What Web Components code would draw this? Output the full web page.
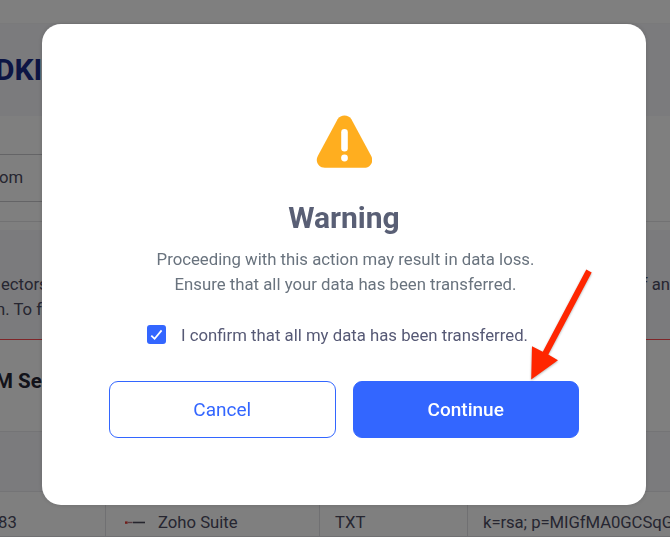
<!DOCTYPE html>
<html lang="en">
<head>
<meta charset="utf-8">
<title>DKIM</title>
<style>
    html, body {
        margin: 0;
        height: 100%;
        overflow: hidden;
        background: #fff;
        font-family: Roboto, "Liberation Sans", sans-serif;
    }
</style>
</head>
<body>
<dkim-page></dkim-page>
<confirm-dialog heading="Warning">
    <span>Proceeding with this action may result in data loss.<br>Ensure that all your data has been transferred.</span>
    <check-box slot="confirm">I confirm that all my data has been transferred.</check-box>
    <action-button slot="actions">Cancel</action-button>
    <action-button slot="actions" primary>Continue</action-button>
</confirm-dialog>
<pointer-arrow></pointer-arrow>

<script>
class DkimPage extends HTMLElement {
    constructor() {
        super();
        this.shadow = this.attachShadow( { mode: 'open' } );
    }

    connectedCallback() {
        this.render();
    }

    render() {
        this.shadow.innerHTML = `
            <style>
                :host {
                    display: flex;
                    flex-direction: column;
                    width: 670px;
                    height: 537px;
                    overflow: hidden;
                    color: #4c4c62;
                    font-size: 16.7px;
                    white-space: nowrap;
                }

                div, h1, h2 {
                    box-sizing: border-box;
                    flex: none;
                }

                .top {
                    height: 24px;
                    border-bottom: 1px solid #f4f4f6;
                }

                .title {
                    height: 92px;
                    margin: 0;
                    background: #f6f6fa;
                    color: #182a88;
                    font-size: 30px;
                    line-height: 91px;
                    font-weight: 700;
                    text-indent: -5px;
                }

                .domain {
                    height: 106px;
                    padding-top: 38px;
                    border-bottom: 1px solid #e4e4e6;
                }

                .input {
                    width: 400px;
                    height: 48px;
                    border: solid #c8c8cc;
                    border-width: 1px 0;
                    line-height: 46px;
                    text-indent: -1px;
                }

                .note {
                    display: flex;
                    justify-content: space-between;
                    height: 110px;
                    margin-top: 8px;
                    padding-top: 42px;
                    background: #f6f6fa;
                    border-bottom: 1px solid #ff4a50;
                    line-height: 25px;
                }

                .note div:first-child {
                    padding-left: 1px;
                }

                .note span {
                    margin-left: -5px;
                }

                .selectors {
                    height: 91px;
                    margin: 0;
                    font-size: 20.5px;
                    line-height: 82px;
                    color: #262634;
                    text-indent: -5px;
                }

                .band {
                    height: 61px;
                    background: #f6f6fa;
                    border: solid #e8e8ec;
                    border-width: 1px 0;
                }

                .row {
                    display: grid;
                    grid-template-columns: 106px 214px 148px 1fr;
                    height: 45px;
                    line-height: 61px;
                    border-bottom: 1px solid #e0e0e4;
                }

                .row > div {
                    padding-left: 15px;
                    border-right: 1px solid #e0e0e4;
                    height: 44px;
                    min-width: 0;
                }

                .row > div:first-child {
                    padding-left: 0;
                    text-indent: -2px;
                }

                .row > div:last-child {
                    border-right: 0;
                    letter-spacing: -.07px;
                }

                .row > div:nth-child(2) {
                    display: flex;
                    align-items: baseline;
                    gap: 13px;
                    padding-left: 19px;
                }

                .row svg {
                    width: 20px;
                    height: 3px;
                    position: relative;
                    top: -4px;
                }
            </style>
            <div class="top"></div>
            <h1 class="title">DKI</h1>
            <div class="domain"><div class="input">om</div></div>
            <div class="note">
                <div>ectors<br><span>n. To f</span></div>
                <div>f an</div>
            </div>
            <h2 class="selectors">M Se</h2>
            <div class="band"></div>
            <div class="row">
                <div>83</div>
                <div>
                    <svg viewBox="0 0 20 3">
                        <rect y="0.4" width="2.6" height="2.4" fill="#e33b35"/>
                        <path d="M2.6 1.5h5" stroke="#b07a84" stroke-width="1.4"/>
                        <path d="M8 1.5h12" stroke="#4a4a5a" stroke-width="1.6"/>
                    </svg>
                    <span>Zoho Suite</span>
                </div>
                <div>TXT</div>
                <div>k=rsa; p=MIGfMA0GCSqG</div>
            </div>
        `
    }
}

class ConfirmDialog extends HTMLElement {
    constructor() {
        super();
        this.shadow = this.attachShadow( { mode: 'open' } );
    }

    connectedCallback() {
        this.render();
    }

    render() {
        this.shadow.innerHTML = `
            <style>
                :host {
                    position: fixed;
                    inset: 0;
                    background: rgba(0,0,0,.5);
                }

                #dialog {
                    box-sizing: border-box;
                    width: 604px;
                    height: 480.5px;
                    margin: 24px 0 0 42px;
                    padding: 91px 67px 0;
                    border-radius: 19px;
                    background: #fff;
                    box-shadow: 0 0 5px rgba(0,0,0,.15);
                    display: flex;
                    flex-direction: column;
                    align-items: center;
                    text-align: center;
                }

                #icon {
                    display: block;
                    width: 56px;
                    height: 54px;
                    flex: none;
                }

                h1 {
                    margin: 31px 0 0;
                    font-size: 30px;
                    line-height: 36px;
                    font-weight: 700;
                    color: #595f75;
                }

                p {
                    margin: 11px 0 0;
                    padding-left: 3px;
                    font-size: 16.75px;
                    line-height: 25px;
                    color: #69737e;
                    white-space: nowrap;
                }

                #confirm {
                    margin: 26px 13px 0 0;
                }

                #actions {
                    display: flex;
                    gap: 17px;
                    width: 470px;
                    margin-top: 33.5px;
                }
            </style>
            <div id="dialog">
                <svg id="icon" viewBox="0 0 56 54">
                    <path d="M21.6 4.2C24.6-.8 32.4-.8 35.4 4.2L55.2 41C58.2 46.8 54.3 52.8 48.1 52.8H8.9C2.7 52.8-1.2 46.8 1.8 41Z" fill="#ffae1f"/>
                    <path d="M28.5 17.3V33.2" stroke="#fff" stroke-width="6.6" stroke-linecap="round"/>
                    <circle cx="28.5" cy="43" r="3.4" fill="#fff"/>
                </svg>
                <h1>${this.getAttribute( 'heading' )}</h1>
                <p><slot></slot></p>
                <div id="confirm"><slot name="confirm"></slot></div>
                <div id="actions"><slot name="actions"></slot></div>
            </div>
        `
    }
}

class CheckBox extends HTMLElement {
    constructor() {
        super();
        this.shadow = this.attachShadow( { mode: 'open' } );
    }

    connectedCallback() {
        this.render();
    }

    render() {
        this.shadow.innerHTML = `
            <style>
                :host {
                    display: flex;
                    align-items: flex-start;
                    gap: 15px;
                    height: 24px;
                    font-size: 16.75px;
                    line-height: 24px;
                    color: #565975;
                    white-space: nowrap;
                }

                svg {
                    width: 19px;
                    height: 19px;
                    margin-top: 2px;
                    flex: none;
                }
            </style>
            <svg viewBox="0 0 19 19">
                <rect width="19" height="19" rx="3" fill="#3366ff"/>
                <path d="M4.3 10.6L7.6 13.8L14.6 5.4" fill="none" stroke="#fff" stroke-width="1.8"/>
            </svg>
            <span><slot></slot></span>
        `
    }
}

class ActionButton extends HTMLElement {
    constructor() {
        super();
        this.shadow = this.attachShadow( { mode: 'open' } );
    }

    connectedCallback() {
        this.render();
    }

    render() {
        this.shadow.innerHTML = `
            <style>
                :host {
                    display: block;
                    flex: 1;
                }

                button {
                    display: block;
                    box-sizing: border-box;
                    width: 100%;
                    height: 57px;
                    padding: 1px 0 0;
                    border: 1.4px solid #3366ff;
                    border-radius: 9px;
                    background: #fff;
                    color: #3366ff;
                    font: 400 19px/54px Roboto, "Liberation Sans", sans-serif;
                }

                :host([primary]) button {
                    background: #3366ff;
                    color: #fff;
                    font-weight: 500;
                }
            </style>
            <button><slot></slot></button>
        `
    }
}

class PointerArrow extends HTMLElement {
    constructor() {
        super();
        this.shadow = this.attachShadow( { mode: 'open' } );
    }

    connectedCallback() {
        this.render();
    }

    render() {
        this.shadow.innerHTML = `
            <style>
                :host {
                    position: absolute;
                    left: 520px;
                    top: 260px;
                    width: 80px;
                    height: 130px;
                    filter: drop-shadow(0 1px 1px rgba(0,0,0,.3));
                }

                svg {
                    display: block;
                }
            </style>
            <svg width="80" height="130" viewBox="0 0 80 130">
                <path d="M66.3 9.6L71.7 12.6L28.3 94.6L38 100.3L11.2 119.5L12 86.3L22.8 91.8Z" fill="#ff2600"/>
            </svg>
        `
    }
}

customElements.define('dkim-page', DkimPage);
customElements.define('check-box', CheckBox);
customElements.define('action-button', ActionButton);
customElements.define('confirm-dialog', ConfirmDialog);
customElements.define('pointer-arrow', PointerArrow);
</script>
</body>
</html>
